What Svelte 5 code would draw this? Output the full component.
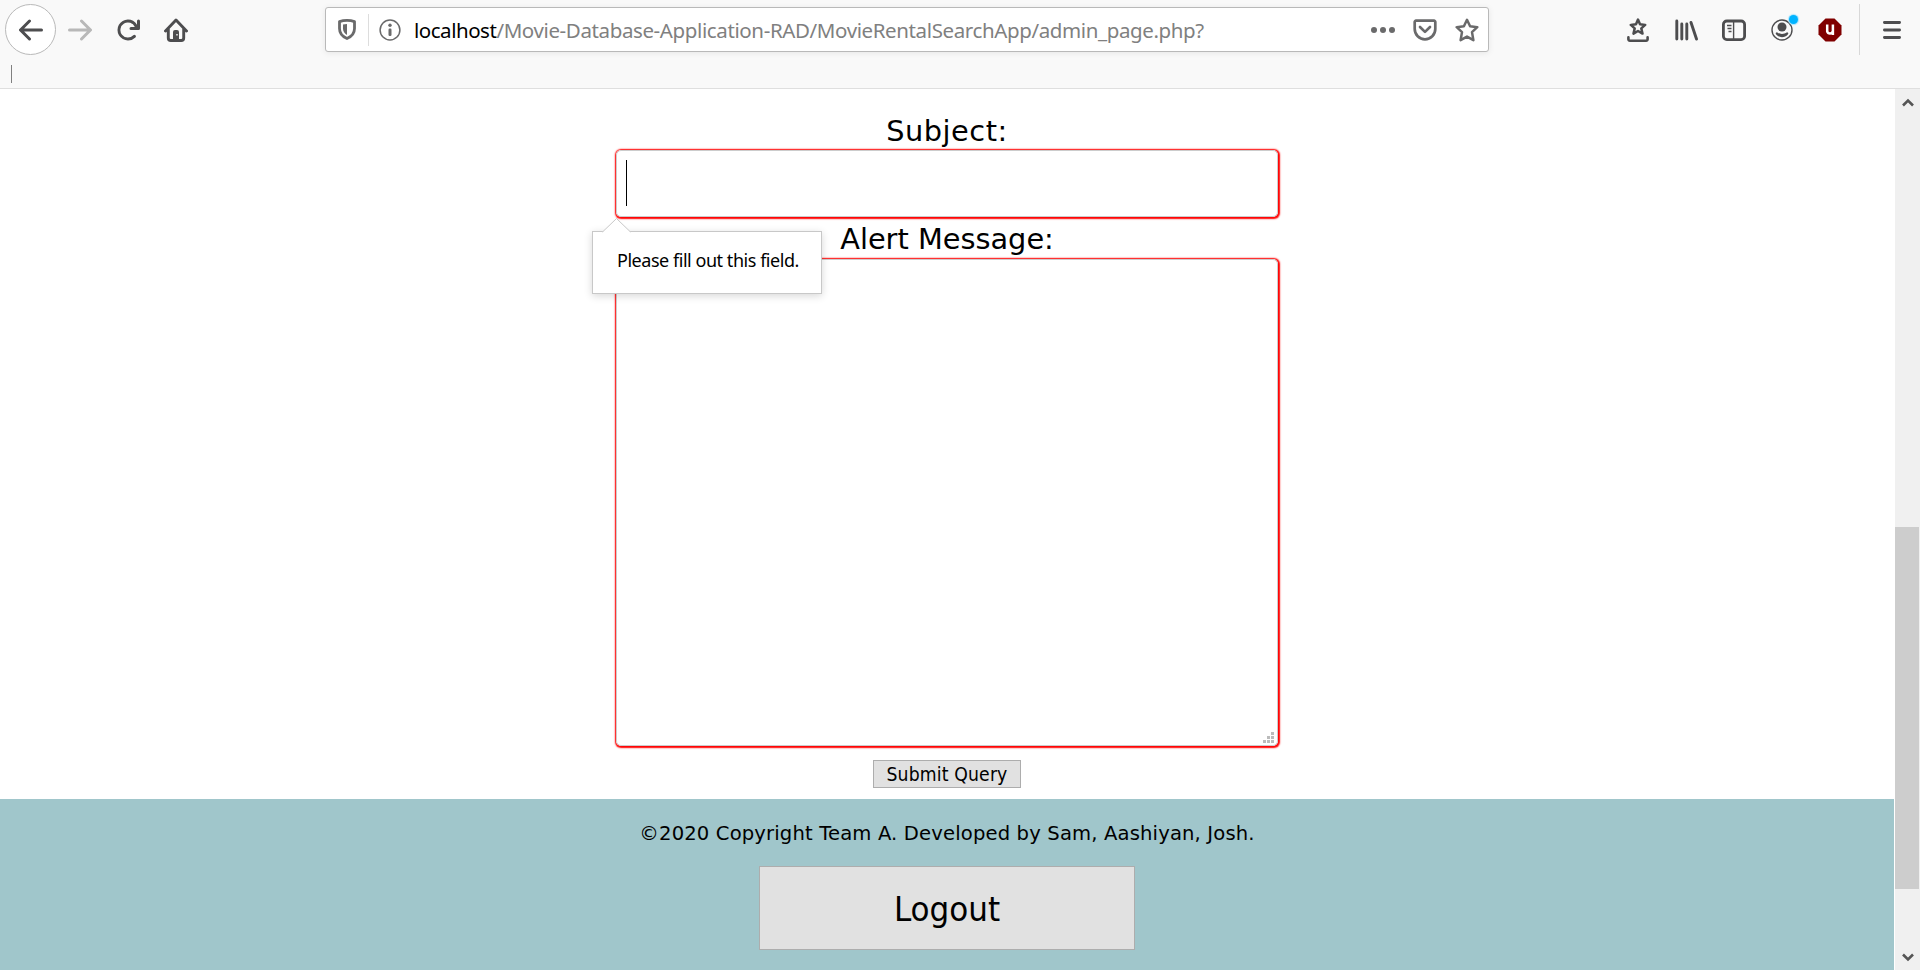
<script>
  const host = 'localhost';
  const path = '/Movie-Database-Application-RAD/MovieRentalSearchApp/admin_page.php?';
</script>

<div class="browser">
  <header>
    <div class="toolbar">
      <button class="back" aria-label="Back">
        <svg viewBox="0 0 16 16"><path d="M15 7H3.414l4.293-4.293a1 1 0 0 0-1.414-1.414l-6 6a1 1 0 0 0 0 1.414l6 6a1 1 0 0 0 1.414-1.414L3.414 9H15a1 1 0 0 0 0-2z" /></svg>
      </button>
      <svg class="forward" viewBox="0 0 16 16"><path d="M1 7h11.586L8.293 2.707a1 1 0 0 1 1.414-1.414l6 6a1 1 0 0 1 0 1.414l-6 6a1 1 0 0 1-1.414-1.414L12.586 9H1a1 1 0 0 1 0-2z" /></svg>
      <svg class="reload" viewBox="0 0 16 16"><path d="M15 1a1 1 0 0 0-1 1v2.418A6.995 6.995 0 1 0 8 15a6.954 6.954 0 0 0 4.95-2.05 1 1 0 0 0-1.414-1.414A5.019 5.019 0 1 1 12.549 6H10a1 1 0 0 0 0 2h5a1 1 0 0 0 1-1V2a1 1 0 0 0-1-1z" /></svg>
      <svg class="home" viewBox="0 0 24 24">
        <path d="M1.5 13 12 2l10.500 11M4.300 11v9a2.500 2.500 0 0 0 2.500 2.500h10.400a2.500 2.500 0 0 0 2.500-2.500v-9" fill="none" stroke="#4d4d4f" stroke-width="2.900" stroke-linecap="round" stroke-linejoin="round" />
        <path fill-rule="evenodd" d="M9 22v-8a2 2 0 0 1 2-2h2a2 2 0 0 1 2 2v8zM12.300 16h1.400v1.600h-1.400z" />
      </svg>

      <div class="urlbar">
        <svg class="shield" viewBox="0 0 18 21"><path d="M9 1.400c2.600 0 5.200.4 7.500 1.200v6.900c0 4.600-2.800 8-7.500 10-4.700-2-7.500-5.400-7.500-10V2.600C3.800 1.800 6.400 1.400 9 1.400z" fill="none" stroke="#6a6a6b" stroke-width="2.800" stroke-linejoin="round" /><path fill="#6a6a6b" d="M9 5v11c-2.500-1.500-4-3.700-4-6.600V5.600C6.300 5.200 7.600 5 9 5z" /></svg>
        <span class="rule"></span>
        <svg class="info" viewBox="0 0 22 22"><circle cx="11" cy="11" r="9.900" fill="none" stroke="#6a6a6b" stroke-width="1.500" /><circle cx="11" cy="6.300" r="1.700" /><rect x="9.500" y="9.500" width="3" height="7.500" rx="1.200" /></svg>
        <span class="address"><span class="host">{host}</span>{path}</span>
        <svg class="dots" viewBox="0 0 24 6"><circle cx="3" cy="3" r="3" /><circle cx="12" cy="3" r="3" /><circle cx="21" cy="3" r="3" /></svg>
        <svg class="pocket" viewBox="0 0 24 22"><g fill="none" stroke="#6a6a6b" stroke-linecap="round" stroke-linejoin="round"><path stroke-width="2.700" d="M3 1.700h18a1.300 1.300 0 0 1 1.300 1.300v7a10.300 10.300 0 0 1-20.600 0V3A1.300 1.300 0 0 1 3 1.700z" /><path stroke-width="2.700" d="m7 8 5 4.900L17 8" /></g></svg>
        <svg class="star" viewBox="0 0 24 24"><path fill="none" stroke="#6a6a6b" stroke-width="2.500" stroke-linejoin="round" d="m12 1.800 3.100 6.500 7.200.9-5.300 4.900 1.400 8.100-6.400-3.600-6.400 3.600L7 14.100 1.700 9.200l7.200-.9z" /></svg>
      </div>

      <div class="tools">
        <svg viewBox="0 0 24 24"><g fill="none" stroke="#4d4d4f" stroke-linejoin="round"><path stroke-width="2.500" d="m12 1.600 2 4.700 5.200.6-3.900 3.500 1.200 5.200-4.500-2.600-4.500 2.600 1.200-5.200-3.900-3.500 5.200-.6z" /><path stroke-width="2.600" stroke-linecap="round" d="M2.400 19.400v1.800a1.500 1.500 0 0 0 1.500 1.500h16.200a1.500 1.500 0 0 0 1.500-1.500v-1.800" /></g></svg>
        <svg viewBox="0 0 24 24"><g stroke="#4d4d4f" stroke-width="2.900" stroke-linecap="round"><path d="M2.800 3v18M7.800 6v15M12.800 6v15M17 4.500 22.500 21" /></g></svg>
        <svg viewBox="0 0 24 24"><rect x="1.400" y="3" width="21.200" height="18.600" rx="3.400" fill="none" stroke="#4d4d4f" stroke-width="2.800" /><path d="M11.600 4v17M5 7.500h4.500M5.500 10.500h4M6.500 13.500h3" stroke="#4d4d4f" stroke-width="1.400" /></svg>
        <span class="account">
          <svg viewBox="0 0 24 24"><circle cx="12" cy="12" r="10" fill="none" stroke="#4d4d4f" stroke-width="1.400" /><circle cx="12" cy="9" r="4.500" /><path d="M7 14.200c3 2.300 7 2.300 10 0 1.600.2 1.600 1.300.8 2.200-3 3.700-8.600 3.700-11.600 0-.8-.9-.8-2 .8-2.200z" /></svg>
          <i class="badge"></i>
        </span>
        <svg viewBox="0 0 24 24"><path fill="#800000" d="M7.500.5h9l7 7v9l-7 7h-9l-7-7v-9z" /><path d="M9.200 6.500v6.800a2.900 2.900 0 0 0 5.600 0M14.900 6.500v10.500" fill="none" stroke="#fff" stroke-width="2.500" /></svg>
      </div>
      <span class="divider"></span>
      <svg class="menu" viewBox="0 0 18 18"><path d="M1.400 1.500h15.200M1.400 9h15.200M1.400 16.500h15.200" stroke="#4d4d4f" stroke-width="2.800" stroke-linecap="round" /></svg>
    </div>
    <div class="bookmarks"><span></span></div>
  </header>

  <div class="viewport">
    <div class="page">
      <main>
        <div class="label first">Subject:</div>
        <div class="field subject">
          <span class="caret"></span>
          <div class="tip">
            <svg viewBox="0 0 30 15"><path d="M0 14.500 14.500.5l14.500 14V15H0z" fill="#fff" /><path d="M.5 14 14.500.5 28.500 14" fill="none" stroke="#c8c8c8" /></svg>
            Please fill out this field.
          </div>
        </div>
        <div class="label second">Alert Message:</div>
        <div class="field message">
          <svg class="grip" viewBox="0 0 11 11"><path d="M8 0h3v3H8zM4 4h3v3H4zM8 4h3v3H8zM0 8h3v3H0zM4 8h3v3H4zM8 8h3v3H8z" /></svg>
        </div>
        <button class="submit">Submit Query</button>
      </main>
      <footer>
        <p>©2020 Copyright Team A. Developed by Sam, Aashiyan, Josh.</p>
        <button class="logout">Logout</button>
      </footer>
    </div>
    <div class="scrollbar">
      <svg viewBox="0 0 12 10"><path d="M1 7.500 6 2.500l5 5" /></svg>
      <div class="thumb"></div>
      <svg viewBox="0 0 12 10"><path d="m1 2.500 5 5 5-5" /></svg>
    </div>
  </div>
</div>

<style>
  :global(body) { margin: 0; overflow: hidden; }
  * { box-sizing: border-box; }
  svg { display: block; flex: none; fill: #4d4d4f; }
  button { font: inherit; color: #000; padding: 0; margin: 0; }
  .browser { width: 1920px; height: 970px; display: flex; flex-direction: column; background: #fff; color: #000; font-family: "DejaVu Sans", sans-serif; }

  header { height: 89px; flex: none; background: #f9f9f9; border-bottom: 1px solid #dfdfdf; }
  .toolbar { height: 59px; display: flex; align-items: center; padding-left: 5px; }
  .toolbar svg { width: 24px; height: 24px; }
  .back { width: 51px; height: 51px; display: grid; place-items: center; border: 1px solid #b9b9b9; border-radius: 50%; background: #fff; }
  .forward { margin-left: 12px; fill: #b8b8b8 !important; }
  .reload { margin-left: 24px; }
  .home { margin-left: 24px; }

  .urlbar { width: 1164px; height: 45px; margin-left: 137px; display: flex; align-items: center; border: 1px solid #b9b9b9; border-radius: 3px; background: #fff; box-shadow: 0 1px 6px rgba(0, 0, 0, 0.08); }
  .urlbar svg { fill: #6a6a6b; }
  .urlbar .shield { width: 18px; height: 21px; margin-left: 12px; }
  .rule { width: 1px; height: 32px; margin-left: 12px; background: #ddd; }
  .urlbar .info { width: 22px; height: 22px; margin-left: 10px; }
  .address { flex: 1; padding-left: 13px; font: 20.5px/30px "Noto Sans", sans-serif; letter-spacing: -0.38px; color: #808080; white-space: nowrap; }
  .host { color: #000; letter-spacing: -0.47px; }
  .urlbar .dots { width: 24px; height: 6px; }
  .urlbar .pocket { width: 24px; height: 22px; margin-left: 18px; }
  .urlbar .star { margin: 0 9px 0 18px; }

  .tools { display: flex; gap: 24px; margin-left: 137px; }
  .account { position: relative; }
  .badge { position: absolute; top: -3px; right: -4px; width: 9px; height: 9px; border-radius: 50%; background: #00b3ff; box-shadow: 0 0 1px 1px #a9e4fd; }
  .divider { width: 1px; height: 51px; margin-left: 17px; background: #d8d8d8; }
  .toolbar .menu { width: 18px; height: 18px; margin-left: 23px; }
  .bookmarks { padding: 6px 0 0 11px; }
  .bookmarks span { display: block; width: 1px; height: 18px; background: #808080; }

  .viewport { flex: 1; display: flex; min-height: 0; }
  .page { width: 1894px; margin-right: 1px; display: flex; flex-direction: column; }
  main { height: 710px; display: flex; flex-direction: column; align-items: center; padding-top: 23px; }
  .label { height: 42px; line-height: 44px; font-size: 28.8px; letter-spacing: 0; white-space: nowrap; }
  .first { height: 38px; line-height: 38px; letter-spacing: 0.5px; }
  .field { position: relative; width: 662px; border: 1px solid #ccc; border-radius: 5px; box-shadow: 0.5px 0.5px 1.5px 1px red; }
  .subject { height: 67px; padding: 9px; }
  .caret { display: block; width: 1px; height: 46px; background: #000; }
  .message { height: 487px; display: flex; align-items: flex-end; justify-content: flex-end; padding: 2px 3px; }
  .grip { width: 11px; height: 11px; fill: #bbb; }
  .tip { position: absolute; z-index: 1; left: -25px; top: 80px; width: 230px; height: 63px; padding-left: 24px; border: 1px solid #c8c8c8; background: #fff; box-shadow: 0 2px 8px rgba(0, 0, 0, 0.16); font: 18px/57px "Noto Sans", sans-serif; letter-spacing: -0.46px; white-space: nowrap; }
  .tip svg { position: absolute; left: 9px; top: -14px; width: 30px; height: 15px; }
  .submit, .logout { border: 1px solid #adadad; background: #e1e1e1; font-family: "DejaVu Sans Condensed", "DejaVu Sans", sans-serif; font-stretch: semi-condensed; }
  .submit { width: 148px; height: 28px; margin-top: 14px; padding-top: 2px; font-size: 19.2px; line-height: 24px; letter-spacing: 0.15px; }

  footer { flex: 1; display: flex; flex-direction: column; align-items: center; background: #a0c6cb; }
  p { margin: 21px 0 0; font-size: 19.6px; line-height: 28px; letter-spacing: 0.14px; white-space: nowrap; }
  .logout { width: 376px; height: 84px; margin-top: 18px; padding-top: 2px; font-size: 34.5px; }

  .scrollbar { width: 25px; height: 881px; display: flex; flex-direction: column; align-items: center; justify-content: space-between; padding: 9px 0 8px; background: #f0f0f0; }
  .scrollbar svg { width: 12px; height: 10px; }
  .scrollbar path { fill: none; stroke: #555; stroke-width: 2.6; }
  .thumb { width: 24px; height: 362px; margin: 419px 1px auto 0; background: #cdcdcd; }
</style>
